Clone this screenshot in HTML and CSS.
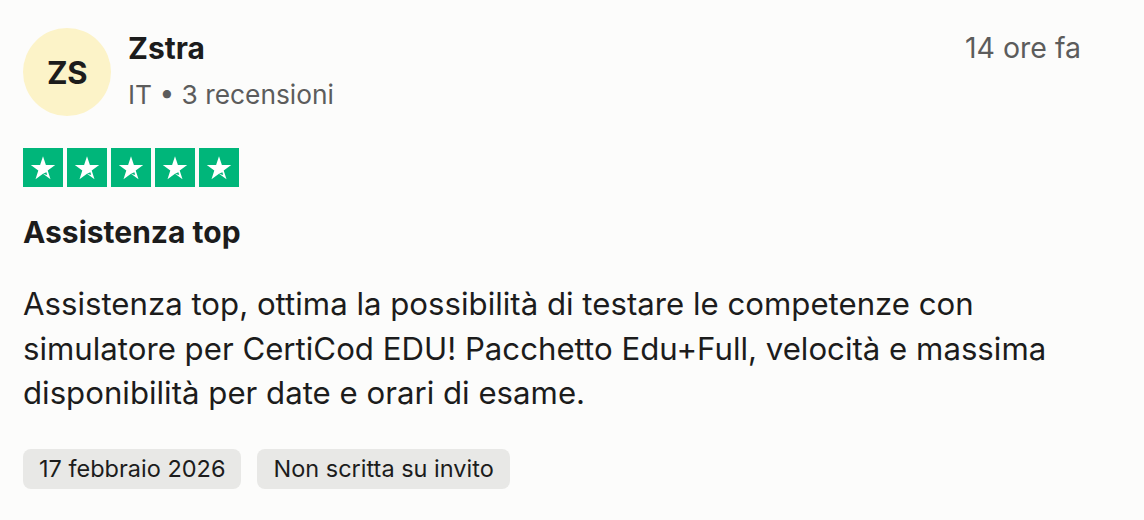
FILE: index.html
```html
<!DOCTYPE html>
<html lang="it">
<head>
<meta charset="utf-8">
<title>Recensione</title>
<link rel="stylesheet" href="styles.css">
</head>
<body>
<article class="review">
  <header class="review-header">
    <div class="avatar">ZS</div>
    <div class="consumer">
      <div class="consumer-name">Zstra</div>
      <div class="consumer-meta">IT • 3 recensioni</div>
    </div>
    <time class="review-time">14 ore fa</time>
  </header>
  <div class="stars" aria-label="5 stelle su 5">
    <span class="star"><svg viewBox="0 0 40 40" width="40" height="40"><polygon points="20,8.2 22.9,17 32.2,17 24.7,22.4 27.5,31.3 20,25.8 12.5,31.3 15.3,22.4 7.8,17 17.1,17" fill="#fff"/><path d="M23.4 24.2 L24.2 26.9 L20 25.8 Z" fill="#00b67a"/></svg></span>
    <span class="star"><svg viewBox="0 0 40 40" width="40" height="40"><polygon points="20,8.2 22.9,17 32.2,17 24.7,22.4 27.5,31.3 20,25.8 12.5,31.3 15.3,22.4 7.8,17 17.1,17" fill="#fff"/><path d="M23.4 24.2 L24.2 26.9 L20 25.8 Z" fill="#00b67a"/></svg></span>
    <span class="star"><svg viewBox="0 0 40 40" width="40" height="40"><polygon points="20,8.2 22.9,17 32.2,17 24.7,22.4 27.5,31.3 20,25.8 12.5,31.3 15.3,22.4 7.8,17 17.1,17" fill="#fff"/><path d="M23.4 24.2 L24.2 26.9 L20 25.8 Z" fill="#00b67a"/></svg></span>
    <span class="star"><svg viewBox="0 0 40 40" width="40" height="40"><polygon points="20,8.2 22.9,17 32.2,17 24.7,22.4 27.5,31.3 20,25.8 12.5,31.3 15.3,22.4 7.8,17 17.1,17" fill="#fff"/><path d="M23.4 24.2 L24.2 26.9 L20 25.8 Z" fill="#00b67a"/></svg></span>
    <span class="star"><svg viewBox="0 0 40 40" width="40" height="40"><polygon points="20,8.2 22.9,17 32.2,17 24.7,22.4 27.5,31.3 20,25.8 12.5,31.3 15.3,22.4 7.8,17 17.1,17" fill="#fff"/><path d="M23.4 24.2 L24.2 26.9 L20 25.8 Z" fill="#00b67a"/></svg></span>
  </div>
  <h2 class="review-title">Assistenza top</h2>
  <p class="review-text">Assistenza top, ottima la possibilità di testare le competenze con simulatore per CertiCod EDU! Pacchetto Edu+Full, velocità e massima disponibilità per date e orari di esame.</p>
  <div class="tags">
    <span class="tag">17 febbraio 2026</span>
    <span class="tag">Non scritta su invito</span>
  </div>
</article>
</body>
</html>
```

FILE: styles.css
```css
html, body {
  margin: 0;
  padding: 0;
  background: #fcfcfb;
}

body {
  font-family: Inter, "Noto Sans", "Liberation Sans", sans-serif;
  color: #1c1c1c;
}

.review {
  width: 1058px;
  padding: 28px 63px 0 23px;
}

.review-header {
  display: flex;
  align-items: flex-start;
  gap: 17px;
}

.avatar {
  width: 88px;
  height: 88px;
  border-radius: 50%;
  background: #fcf3c8;
  display: flex;
  align-items: center;
  justify-content: center;
  font-size: 31px;
  font-weight: 700;
  letter-spacing: -0.5px;
  color: #1c1c1c;
  flex: none;
}

.consumer {
  flex: 1;
  display: flex;
  flex-direction: column;
}

.consumer-name {
  font-size: 30px;
  font-weight: 700;
  line-height: 40px;
}

.consumer-meta {
  font-size: 26.3px;
  line-height: 40px;
  margin-top: 7px;
  color: #5c5c5c;
}

.review-time {
  font-size: 28.5px;
  line-height: 40px;
  color: #5c5c5c;
}

.stars {
  display: flex;
  gap: 4px;
  margin-top: 32px;
}

.star {
  width: 40px;
  height: 39px;
  background: #00b67a;
  display: flex;
  align-items: center;
  justify-content: center;
  overflow: hidden;
}

.star svg {
  display: block;
}

.review-title {
  margin: 25px 0 0;
  font-size: 30px;
  font-weight: 700;
  line-height: 40px;
}

.review-text {
  margin: 30px 0 0;
  font-size: 31.2px;
  line-height: 44.5px;
}

.tags {
  display: flex;
  gap: 16px;
  margin-top: 33px;
}

.tag {
  background: #e8e8e6;
  border-radius: 8px;
  padding: 0 16px;
  height: 40px;
  display: flex;
  align-items: center;
  font-size: 23.5px;
  color: #1c1c1c;
}
```
